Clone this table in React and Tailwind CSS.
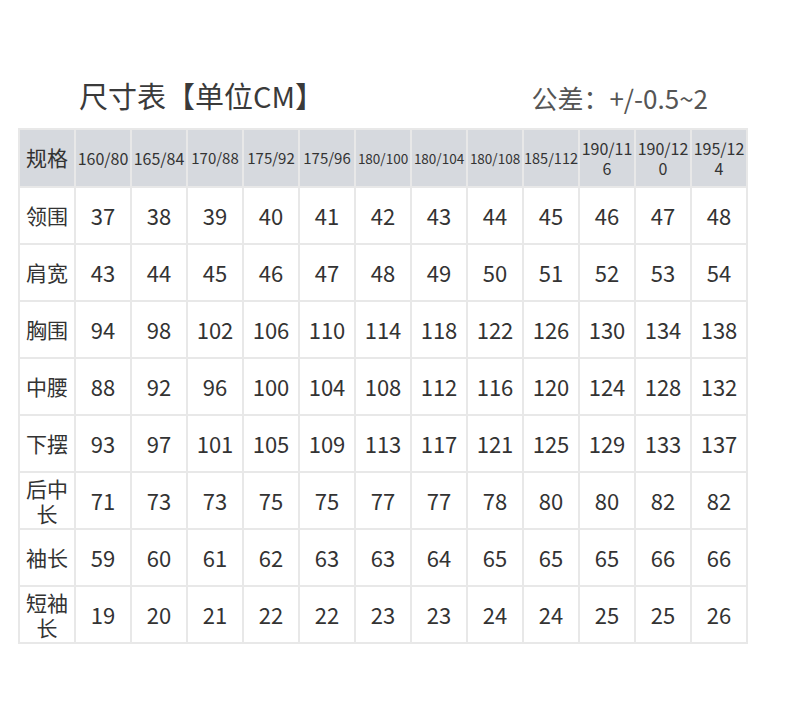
import React from 'react';

const headers = [
    { t: '160/80', c: 'text-[16px]' },
    { t: '165/84', c: 'text-[16px]' },
    { t: '170/88', c: 'text-[15px]' },
    { t: '175/92', c: 'text-[15px]' },
    { t: '175/96', c: 'text-[15px]' },
    { t: '180/100', c: 'text-[13.5px]' },
    { t: '180/104', c: 'text-[13.5px]' },
    { t: '180/108', c: 'text-[13.5px]' },
    { t: '185/112', c: 'text-[14.5px]' },
    { t: '190/116', c: 'text-[16px] break-all leading-[20px]' },
    { t: '190/120', c: 'text-[16px] break-all leading-[20px]' },
    { t: '195/124', c: 'text-[16px] break-all leading-[20px]' },
];

const rows = [
    ['领围', [37, 38, 39, 40, 41, 42, 43, 44, 45, 46, 47, 48]],
    ['肩宽', [43, 44, 45, 46, 47, 48, 49, 50, 51, 52, 53, 54]],
    ['胸围', [94, 98, 102, 106, 110, 114, 118, 122, 126, 130, 134, 138]],
    ['中腰', [88, 92, 96, 100, 104, 108, 112, 116, 120, 124, 128, 132]],
    ['下摆', [93, 97, 101, 105, 109, 113, 117, 121, 125, 129, 133, 137]],
    ['后中长', [71, 73, 73, 75, 75, 77, 77, 78, 80, 80, 82, 82]],
    ['袖长', [59, 60, 61, 62, 63, 63, 64, 65, 65, 65, 66, 66]],
    ['短袖长', [19, 20, 21, 22, 22, 23, 23, 24, 24, 25, 25, 26]],
];

const App = () => (
    <div className="min-h-[701px] w-[790px] bg-white pt-[72px] px-[18px] text-[#333]" style={ { fontFamily: '"Noto Sans CJK SC", "Noto Sans", sans-serif' } } >
        <div className="flex items-center h-[46px] w-[728px]" >
            <p className="pl-[61px] text-[29px] font-normal text-[#3a3a3a] leading-none" >尺寸表【单位CM】</p>
            <p className="ml-auto mr-[38px] mt-[6px] text-[26px] text-[#555] leading-none" >公差：+/-0.5~2</p>
        </div>
        <div className="mt-[10px] grid grid-cols-[repeat(13,54px)] gap-[2px] p-[2px] bg-[#e8e8e8] w-fit" >
            <div className="h-[56px] bg-[#d6d9de] flex items-center justify-center text-[21px]" >规格</div>
            { headers.map((h) => (
                <div key={ h.t } className={ `h-[56px] bg-[#d6d9de] flex items-center justify-center text-center whitespace-normal ${h.c}` } >{ h.t }</div>
            )) }
            { rows.map(([label, vals]) => (
                <React.Fragment key={ label } >
                    <div className="h-[55px] bg-white flex items-center justify-center text-center text-[21px] leading-[25px]" >{ label }</div>
                    { vals.map((v, i) => (
                        <div key={ i } className="h-[55px] bg-white flex items-center justify-center text-[22px]" >{ v }</div>
                    )) }
                </React.Fragment>
            )) }
        </div>
    </div>
);

export default App;
